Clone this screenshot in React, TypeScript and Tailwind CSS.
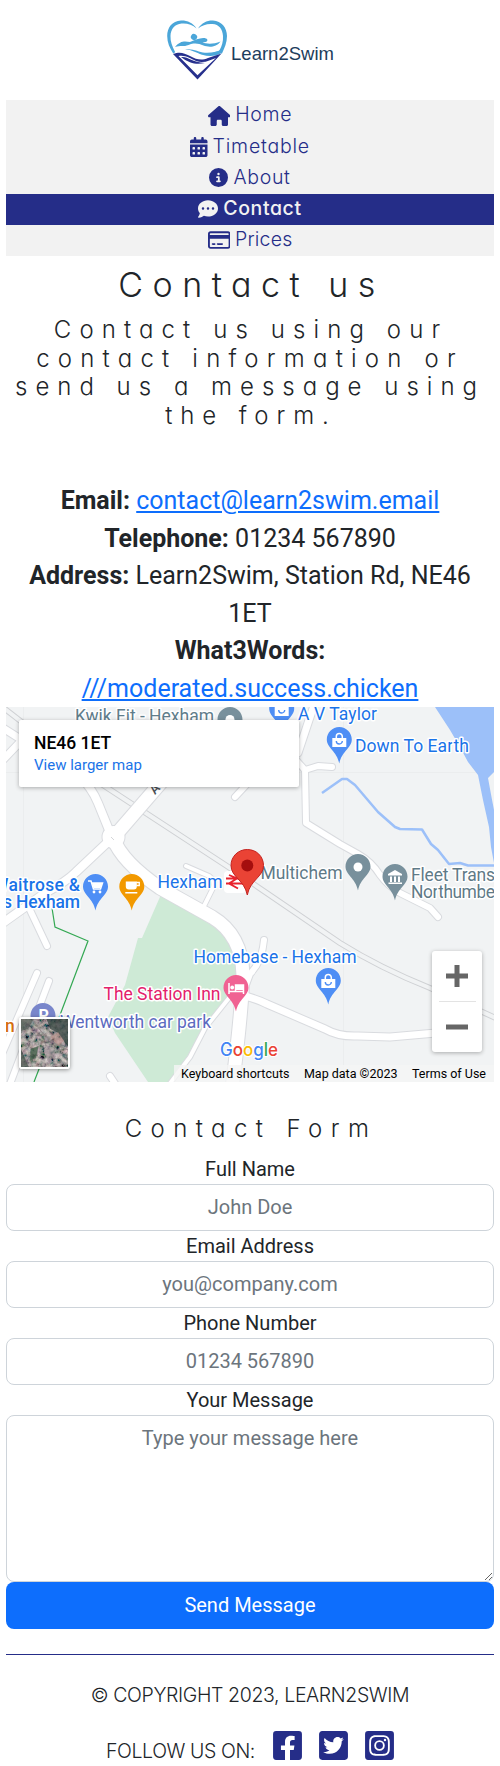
import type { ReactNode } from "react";
import { FaHouse, FaCalendarDays, FaCircleInfo, FaCommentDots, FaRegCreditCard } from "react-icons/fa6";
import { FaFacebookSquare, FaTwitterSquare, FaInstagramSquare } from "react-icons/fa";

const GEO = "font-['Inter',sans-serif] [font-feature-settings:'cv11']";

function Logo() {
  return (
    <div className="flex h-[94px] items-start justify-center pl-px pt-[14px]">
      <svg className="h-[60px] w-[60px]" viewBox="0 0 60 60" fill="none">
        <path d="M29.5 8.500C26 2.500 20 .2 14 .4 5 1 .2 7.500.2 16c0 6.500 2.500 12 6 17.500l2-1.300C5 26 3.300 21.500 3.500 16 3.700 9 8 4 14.500 3.500 20 3 25.500 4.500 29.500 8.500Z" fill="#4ba6d9" />
        <path d="M31 8.500C35 2.500 40 .2 46 .4 54.500 1 60 7.500 60 16c0 6.500-2.500 12-5 17.500l-15-1.300c5 0 10 0 12.500-2C55 26 56.300 21.500 56 16 55.600 9 52 4.500 45.500 4 40 3.500 35.500 5 31 8.500Z" fill="#4ba6d9" />
        <ellipse cx="27" cy="17" rx="3.200" ry="3" transform="rotate(35 27 17)" fill="#4ba6d9" />
        <path d="M8 27c5-6 9-6 15-5 6-2 11-5 16-3.500 2 .6 2 3-.5 3.500l-3 .5c4 1.500 11 2 18-1-4 6-12 6-17 4-5-2-9-3-15-.5-5 2-8 0-13.500 2Z" fill="#4ba6d9" />
        <path d="M18 29.500c8-1.500 13 2.500 20 3.200 7 .6 11-1 17-3l-2 4c-5 2.500-11 3-18 1-6-2-10-5-17-5.200Z" fill="#4ba6d9" />
        <path d="M6 34c7-2.500 11-1 17 2 7 4 12 4.500 18 2l13.500-4.500L30.500 59.500 6 34Zm5.500 2 19 19.300L49 38c-6 2-12 6-20 3-6-2.500-10-6-17.500-5Z" fill="#27308d" fillRule="evenodd" />
        <path d="M14 37c7-1 10 5 24 6-8 1.600-15 1-24-6Z" fill="#27308d" />
      </svg>
      <span className="ml-1 mt-[23px] font-['Liberation_Sans',sans-serif] text-[18.5px] leading-[22px] text-[#1d3d5c]">Learn2Swim</span>
    </div>
  );
}

function NavItem({ icon, label, active, spacing }: { icon: ReactNode; label: string; active?: boolean; spacing: string }) {
  return (
    <a
      className={`flex h-[31.2px] items-center justify-center gap-[5px] text-[19.5px] ${GEO} ${spacing} ${
        active ? "bg-[#252d88] font-medium text-[#f2f2f2]" : "font-light text-[#252d88]"
      }`}
    >
      {icon}
      <span className="-mt-[1px]">{label}</span>
    </a>
  );
}

const ROADS: [string, number][] = [
  ["M0 726 L22 740 L0 763", 7],
  ["M30 910 L47 946", 6],
  ["M37 973 L2 1054", 6],
  ["M49 981 L10 1084", 6],
  ["M110 1076 L118 1088", 6],
  ["M168 1086 L190 1057 L205 1028 L237 988", 4],
  ["M78 774 Q92 788 98 803 L109 830", 8],
  ["M110 840 L76 872 Q66 882 45 893 L0 925", 8],
  ["M186 866 L209 876 Q216 881 213 888 L204 906", 4],
  ["M248 783 L235 797", 6],
  ["M316 700 L309 720 L298 753", 7],
  ["M296 760 L305 770 L318 766 L332 767", 6],
  ["M305 770 L306 823 L340 844 L358 854 Q372 862 380 875 Q388 886 400 893 L430 908 L438 917", 6],
  ["M264 940 Q262 962 250 974 L244 990", 6],
  ["M240 995 Q255 998 267 1004 L325 1029 Q339 1037 358 1036 L390 1037 L436 1033", 7],
  ["M196 742 L113 838 Q122 862 160 888 L212 917 Q242 935 243 975 Q241 1020 232 1088", 13],
];

const PIN = "M0 12.500C0 5.600 5.600 0 12.500 0S25 5.600 25 12.500C25 21 15 24 12.500 36.500 10 24 0 21 0 12.500Z";

function Pin({ x, y, color, children }: { x: number; y: number; color: string; children?: ReactNode }) {
  return (
    <g transform={`translate(${x - 12.5} ${y})`}>
      <path d={PIN} fill={color} />
      {children}
    </g>
  );
}

function Bag() {
  return (
    <g>
      <path d="M5.500 11h14v9h-14z" fill="#fff" />
      <path d="M9.500 12V9.500a3 3 0 0 1 6 0V12" stroke="#fff" strokeWidth="1.500" fill="none" />
      <path d="M9.500 14a3 3 0 0 0 6 0" stroke="#4e8ef5" strokeWidth="1.400" fill="none" />
    </g>
  );
}

function MapLabel({ x, y, w, color, medium, children }: { x: number; y: number; w: number; color: string; medium?: boolean; children: string }) {
  return (
    <text
      x={x}
      y={y}
      textLength={w}
      fill={color}
      stroke="#fff"
      strokeWidth="3"
      strokeLinejoin="round"
      paintOrder="stroke"
      fontSize="17.5"
      fontWeight={medium ? 500 : 400}
    >
      {children}
    </text>
  );
}

function MapDrawing() {
  const rail = "M-4 702 L103 785 L233 870 L340 943 Q380 968 430 988 L500 1020";
  return (
    <svg className="block h-[375px] w-[488px] font-['Roboto',sans-serif]" viewBox="6 707 488 375">
      <rect x="6" y="707" width="488" height="375" fill="#f1f3f4" />
      <path d="M23.500 707V1082M343.500 707V1082M6 772.500H494" stroke="#ebedee" fill="none" />
      <path d="M163 890 142 938H138L125 985 108 1017 115 1033 148 1082H168L187 1057 203 1030 236 988V950L222 920Z" fill="#ceead6" />
      <path d="M435 707H494V772L488 778 491.500 797 494 810V863L491 847 489 827 483 800 478 775 468 762 460 747 450 730Z" fill="#9cc0f9" />
      <path d="M322 793 342 779H347L355 785 378 812 395 827 400 829 422 829.500 431 844 438 850 449 864 460 863 468 865.500H494" stroke="#9cc0f9" strokeWidth="2.500" fill="none" strokeLinejoin="round" />
      <path d={rail} stroke="#cfd1d4" strokeWidth="6" fill="none" />
      <path d={rail} stroke="#f1f3f4" strokeWidth="4" fill="none" />
      {ROADS.map(([d, w]) => (
        <path key={d} d={d} stroke="#d9dbdf" strokeWidth={w + 2} fill="none" strokeLinecap="round" strokeLinejoin="round" />
      ))}
      <circle cx="113.500" cy="837" r="12" fill="#d9dbdf" />
      {ROADS.map(([d, w]) => (
        <path key={d} d={d} stroke="#fff" strokeWidth={w} fill="none" strokeLinecap="round" strokeLinejoin="round" />
      ))}
      <circle cx="113.500" cy="837" r="11" fill="#fff" />
      <path d="m111 837 3 3" stroke="#d4d6d9" />
      <path d="M52 908 55 927 88 941 60 1015 34 1082" stroke="#34a853" strokeWidth="1.200" fill="none" />
      <text x="155" y="795" fontSize="13" fontWeight="500" fill="#4b5157" transform="rotate(-48 155 795)">A</text>

      <MapLabel x={75} y={721.5} w={139} color="#5f7d8b">Kwik Fit - Hexham</MapLabel>
      <Pin x={230} y={707} color="#78909c"><circle cx="12.500" cy="12.500" r="4.500" fill="#fff" /></Pin>
      <MapLabel x={298} y={720} w={79} color="#1a73e8">A V Taylor</MapLabel>
      <Pin x={281.7} y={696} color="#4e8ef5"><Bag /></Pin>
      <MapLabel x={355} y={752} w={114} color="#1a73e8">Down To Earth</MapLabel>
      <Pin x={339.3} y={727} color="#4e8ef5"><Bag /></Pin>
      <MapLabel x={260.5} y={879} w={82} color="#5f7a87">Multichem</MapLabel>
      <Pin x={358} y={854} color="#78909c"><circle cx="12.500" cy="13" r="4.500" fill="#fff" /></Pin>
      <MapLabel x={411} y={881} w={84} color="#5f7a87">Fleet Trans</MapLabel>
      <MapLabel x={411} y={898} w={84} color="#5f7a87">Northumbe</MapLabel>
      <Pin x={395} y={864} color="#78909c">
        <path d="M5.500 10 12.500 6 19.500 10v1.500h-14zM7.500 12.500h2V18h-2zM11.500 12.500h2V18h-2zM15.500 12.500h2V18h-2zM6 18.500h13.500V20H6z" fill="#fff" />
      </Pin>
      <MapLabel x={-7} y={891} w={87} color="#1a73e8" medium>Waitrose &amp;</MapLabel>
      <MapLabel x={3} y={908} w={77} color="#1a73e8" medium>s Hexham</MapLabel>
      <Pin x={95.5} y={874} color="#4e8ef5">
        <path d="M5 7h3l2.500 8h7l2-6H9" stroke="#fff" strokeWidth="1.500" fill="none" />
        <path d="M9 9h10.500l-2 5h-7z" fill="#fff" />
        <circle cx="11" cy="18" r="1.400" fill="#fff" />
        <circle cx="17" cy="18" r="1.400" fill="#fff" />
      </Pin>
      <Pin x={131.8} y={874} color="#f29900">
        <path d="M6.500 7.500h11v5a3 3 0 0 1-3 3h-5a3 3 0 0 1-3-3zM6 18h12v1.500H6z" fill="#fff" />
        <path d="M17 8.500h3v3h-3" stroke="#fff" strokeWidth="1.300" fill="none" />
      </Pin>
      <rect x="224" y="871" width="22" height="22" rx="4" fill="#fff" />
      <path d="M226 878.500h18M226 883.500h18M229 875l8 3.500-8 5 9 5" stroke="#e8222d" strokeWidth="1.900" fill="none" />
      <MapLabel x={157.5} y={888} w={65} color="#1a73e8">Hexham</MapLabel>
      <g transform="translate(231 849)">
        <path d="M0 16.500C0 7.400 7.200.5 16.300.5S32.500 7.400 32.500 16.500C32.500 28 19 31 16.300 46 13.500 31 0 28 0 16.500Z" fill="#ea4335" stroke="#c5221f" />
        <circle cx="16.300" cy="16.500" r="6" fill="#a50e0e" />
      </g>
      <MapLabel x={193.5} y={963} w={163} color="#1a73e8">Homebase - Hexham</MapLabel>
      <Pin x={328.3} y={968} color="#4e8ef5"><Bag /></Pin>
      <MapLabel x={103.5} y={1000} w={117} color="#e3216b">The Station Inn</MapLabel>
      <Pin x={236} y={975} color="#f06292">
        <path d="M5.500 8v11M5.500 16.500h14.500v2.500M20 16v-6h-8v6" stroke="#fff" strokeWidth="1.500" fill="none" />
        <path d="M12 10h8v5h-8z" fill="#fff" />
        <circle cx="8.700" cy="12.500" r="1.900" fill="#fff" />
      </Pin>
      <Pin x={43} y={1003} color="#7986cb" />
      <text x="38.500" y="1021" fontSize="16" fontWeight="700" fill="#fff">P</text>
      <MapLabel x={60} y={1028} w={151} color="#5c6bc0">Wentworth car park</MapLabel>
      <MapLabel x={5} y={1032} w={9} color="#d56e0c" medium>n</MapLabel>
      <text x="220" y="1056" fontSize="18" fontWeight="500" textLength="58" lengthAdjust="spacingAndGlyphs" stroke="#fff" strokeWidth="2" paintOrder="stroke" className="font-['Inter',sans-serif]">
        <tspan fill="#4285f4">G</tspan><tspan fill="#ea4335">o</tspan><tspan fill="#fbbc04">o</tspan><tspan fill="#4285f4">g</tspan><tspan fill="#34a853">l</tspan><tspan fill="#ea4335">e</tspan>
      </text>
    </svg>
  );
}

function Satellite() {
  return (
    <svg className="block h-12 w-[47px]" viewBox="0 0 48 48" preserveAspectRatio="none">
      <filter id="ground" x="0" y="0" width="100%" height="100%">
        <feTurbulence type="fractalNoise" baseFrequency="0.2" numOctaves="4" seed="8" />
        <feColorMatrix values="1.500 .2 0 0 -.44 1.100 .5 0 0 -.42 1.100 .3 .2 0 -.42 0 0 0 0 1" />
      </filter>
      <rect width="48" height="48" fill="#5d5553" />
      <rect width="48" height="48" filter="url(#ground)" opacity=".8" />
      <path d="M26 0H48V28L38 14 30 10Z" fill="#2c3d39" opacity=".7" />
      <path d="M0 0H13L7 10 0 12ZM0 30 8 48H0Z" fill="#384841" opacity=".6" />
      <path d="M10 30 18 27 15 39 9 42Z" fill="#4b6850" opacity=".8" />
      <path d="M30 18 38 13 44 22 38 27Z" fill="#b58880" opacity=".55" />
      <path d="M24 30 33 29 36 38 27 42Z" fill="#9c9095" opacity=".5" />
      <path d="M12 0Q25 23 48 31" stroke="#8c8582" strokeWidth="1.200" fill="none" opacity=".8" />
    </svg>
  );
}

function MapPanel() {
  return (
    <div className="relative h-[375px] w-[488px] overflow-hidden font-['Roboto',sans-serif]">
      <MapDrawing />
      <div className="absolute left-[13px] top-[13px] flex h-[67px] w-[280px] flex-col rounded-[2px] bg-white pl-[15px] pt-[12px] text-left shadow-[0_1px_4px_rgba(0,0,0,0.3)]">
        <span className="text-[17.5px] font-medium leading-[22px] text-black">NE46 1ET</span>
        <a className="mt-[1px] text-[15px] leading-5 text-[#1a73e8]">View larger map</a>
      </div>
      <div className="absolute left-[13px] top-[310px] rounded-[3px] border-2 border-white shadow-[0_1px_4px_rgba(0,0,0,0.4)]">
        <Satellite />
      </div>
      <div className="absolute left-[426px] top-[244px] flex h-[101px] w-[50px] flex-col items-center rounded-[3px] bg-white shadow-[0_1px_4px_rgba(0,0,0,0.3)]">
        <svg className="h-[50px] w-[50px]" viewBox="0 0 50 50"><path d="M14 25H36M25 14V36" stroke="#666" strokeWidth="5" /></svg>
        <div className="h-px w-[37px] bg-[#e3e3e3]" />
        <svg className="h-[50px] w-[50px]" viewBox="0 0 50 50"><path d="M14 25H36" stroke="#666" strokeWidth="5" /></svg>
      </div>
      <div className="absolute bottom-0 right-0 flex h-[17px] w-[320px] items-center justify-between bg-[#f5f5f5]/80 pl-[7px] pr-[8px] text-[12.5px] leading-[17px] text-black">
        <span>Keyboard shortcuts</span>
        <span>Map data ©2023</span>
        <span>Terms of Use</span>
      </div>
    </div>
  );
}

function Field({ label, placeholder }: { label: string; placeholder: string }) {
  return (
    <label className="flex flex-col">
      <span className="leading-[30px]">{label}</span>
      <input className="h-[47px] w-full rounded-lg border border-[#ced4da] px-4 pb-[2px] text-center outline-none placeholder:text-[#6c757d]" placeholder={placeholder} />
    </label>
  );
}

export default function App() {
  return (
    <div className="flex h-[1766px] w-[500px] flex-col bg-white px-[6px] pt-[6px] text-center font-['Roboto',sans-serif] text-[#212529]">
      <Logo />
      <nav className="flex h-[156px] flex-col bg-[#f2f2f2]">
        <NavItem icon={<FaHouse className="h-5 w-[22.5px]" />} label="Home" spacing="tracking-[0.7px]" />
        <NavItem icon={<FaCalendarDays className="h-5 w-[17.5px]" />} label="Timetable" spacing="tracking-[0.8px]" />
        <NavItem icon={<FaCircleInfo className="h-[19px] w-[19px]" />} label="About" spacing="tracking-[0.7px]" />
        <NavItem icon={<FaCommentDots className="h-5 w-5" />} label="Contact" spacing="tracking-[0.6px]" active />
        <NavItem icon={<FaRegCreditCard className="h-5 w-[22.5px]" />} label="Prices" spacing="tracking-[0.2px]" />
      </nav>
      <h1 className={`mt-[8px] h-[42px] pl-[3px] text-[34px] font-light leading-[42px] tracking-[9.5px] ${GEO}`}>Contact us</h1>
      <h2 className={`mt-[10px] flex flex-col whitespace-nowrap text-[24px] font-light leading-[28.5px] ${GEO}`}>
        <span className="pl-[2px] tracking-[8.1px]">Contact us using our</span>
        <span className="tracking-[8.2px]">contact information or</span>
        <span className="tracking-[8px]">send us a message using</span>
        <span className="pl-[2px] tracking-[7.9px]">the form.</span>
      </h2>
      <div className="mt-[52px] flex h-[225px] flex-col text-[25px] leading-[37.5px]">
        <p><b>Email:</b> <a className="text-[#0d6efd] underline">contact@learn2swim.email</a></p>
        <p><b>Telephone:</b> 01234 567890</p>
        <p><b>Address:</b> Learn2Swim, Station Rd, NE46 1ET</p>
        <p><b>What3Words:</b> <a className="text-[#0d6efd] underline">///moderated.success.chicken</a></p>
      </div>
      <MapPanel />
      <h2 className={`mt-[33px] h-[39px] pl-[2px] text-[24px] font-light leading-[28.5px] tracking-[8.4px] ${GEO}`}>Contact Form</h2>
      <form className="flex flex-col text-[20px]">
        <Field label="Full Name" placeholder="John Doe" />
        <Field label="Email Address" placeholder="you@company.com" />
        <Field label="Phone Number" placeholder="01234 567890" />
        <label className="flex flex-col">
          <span className="leading-[30px]">Your Message</span>
          <textarea className="block h-[167px] w-full rounded-lg border border-[#ced4da] px-4 py-[7px] text-center leading-[30px] outline-none placeholder:text-[#6c757d]" placeholder="Type your message here" />
        </label>
        <button type="button" className="h-[47px] rounded-lg bg-[#0d6efd] pb-[2px] text-white">Send Message</button>
      </form>
      <footer className={`mt-[25px] flex flex-col border-t border-[#252d88] text-[19.5px] font-light ${GEO}`}>
        <p className="mt-[26px] leading-[28px] tracking-[-0.37px]">© COPYRIGHT 2023, LEARN2SWIM</p>
        <div className="mt-[20px] flex h-[36px] items-end justify-center">
          <span className="mr-[18px] leading-[28px] tracking-[-0.4px]">FOLLOW US ON:</span>
          <div className="flex gap-[17px] pb-[3px] text-[#252d88]">
            <FaFacebookSquare className="h-[33px] w-[29px]" />
            <FaTwitterSquare className="h-[33px] w-[29px]" />
            <FaInstagramSquare className="h-[33px] w-[29px]" />
          </div>
        </div>
      </footer>
    </div>
  );
}
